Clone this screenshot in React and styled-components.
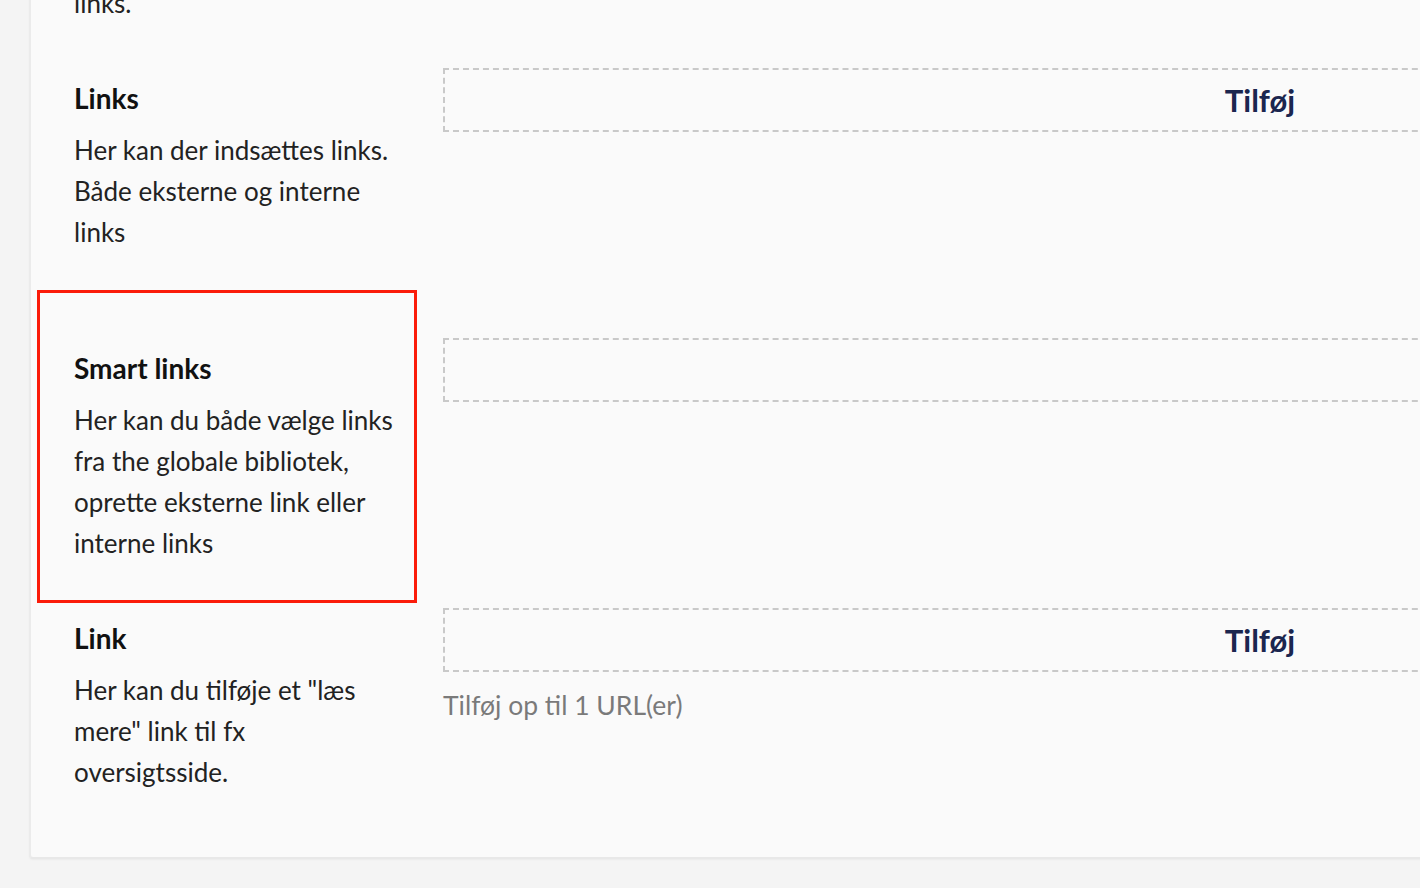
import React from "react";
import styled, { createGlobalStyle } from "styled-components";

const GlobalStyle = createGlobalStyle`
  html, body {
    margin: 0;
    padding: 0;
    background: #f4f4f4;
    font-family: Lato, "Open Sans", sans-serif;
    overflow: hidden;
  }
`;

const properties = [
  {
    label: "Intern navigation",
    description:
      "Her kan der vælges sider\nfra sitet, som vises i en\noversigt med billede og\nlinks.",
    editor: "add",
  },
  {
    label: "Links",
    description: "Her kan der indsættes links. Både eksterne og interne links",
    editor: "add",
  },
  {
    label: "Smart links",
    description:
      "Her kan du både vælge links fra the globale bibliotek, oprette eksterne link eller interne links",
    editor: "empty",
    highlight: true,
  },
  {
    label: "Link",
    description: 'Her kan du tilføje et "læs mere" link til fx oversigtsside.',
    editor: "add",
    help: "Tilføj op til 1 URL(er)",
  },
];

const App = () => {
  return (
    <Page>
      <GlobalStyle />
      <Panel>
        {properties.map((p) => (
          <Row key={p.label}>
            <Label $highlight={p.highlight}>
              <Heading>{p.label}</Heading>
              <Description>{p.description}</Description>
            </Label>
            <Editor>
              <DashedBox>
                {p.editor === "add" && <AddButton>Tilføj</AddButton>}
              </DashedBox>
              {p.help && <HelpText>{p.help}</HelpText>}
            </Editor>
          </Row>
        ))}
      </Panel>
    </Page>
  );
};

const Page = styled.div`
  height: 888px;
  padding-left: 29px;
  overflow: hidden;
`;

const Panel = styled.div`
  width: 2140px;
  margin-top: -202px;
  padding-left: 43px;
  background: #fafafa;
  border-left: 2px solid #ebebeb;
  border-bottom: 2px solid #e8e8e8;
  border-radius: 0 0 0 4px;
  box-shadow: 0 1px 2px rgba(0, 0, 0, 0.04);
`;

const Row = styled.div`
  display: grid;
  grid-template-columns: 322px 1634px;
  column-gap: 47px;
  min-height: 270px;

  &:last-child {
    min-height: 249px;
  }
`;

const Label = styled.div`
  position: relative;
  padding-top: 13px;

  ${(p) =>
    p.$highlight &&
    `
    &::after {
      content: "";
      position: absolute;
      top: -48px;
      left: -37px;
      width: 374px;
      height: 307px;
      border: 3px solid #fb1c0a;
      pointer-events: none;
    }
  `}
`;

const Heading = styled.div`
  font-size: 28px;
  line-height: 34px;
  font-weight: 700;
  color: #111;
`;

const Description = styled.div`
  margin-top: 15px;
  font-size: 26px;
  line-height: 41px;
  color: #222;
  white-space: pre-line;
`;

const Editor = styled.div`
  display: flex;
  flex-direction: column;
`;

const DashedBox = styled.div`
  height: 64px;
  box-sizing: border-box;
  border: 2px dashed #c9c9c9;
  display: flex;
  align-items: center;
  justify-content: center;
`;

const AddButton = styled.span`
  font-size: 31px;
  font-weight: 700;
  color: #1b264f;
  cursor: pointer;
`;

const HelpText = styled.div`
  margin-top: 16px;
  font-size: 26.5px;
  line-height: 34px;
  color: #7a7a7a;
`;

export default App;
